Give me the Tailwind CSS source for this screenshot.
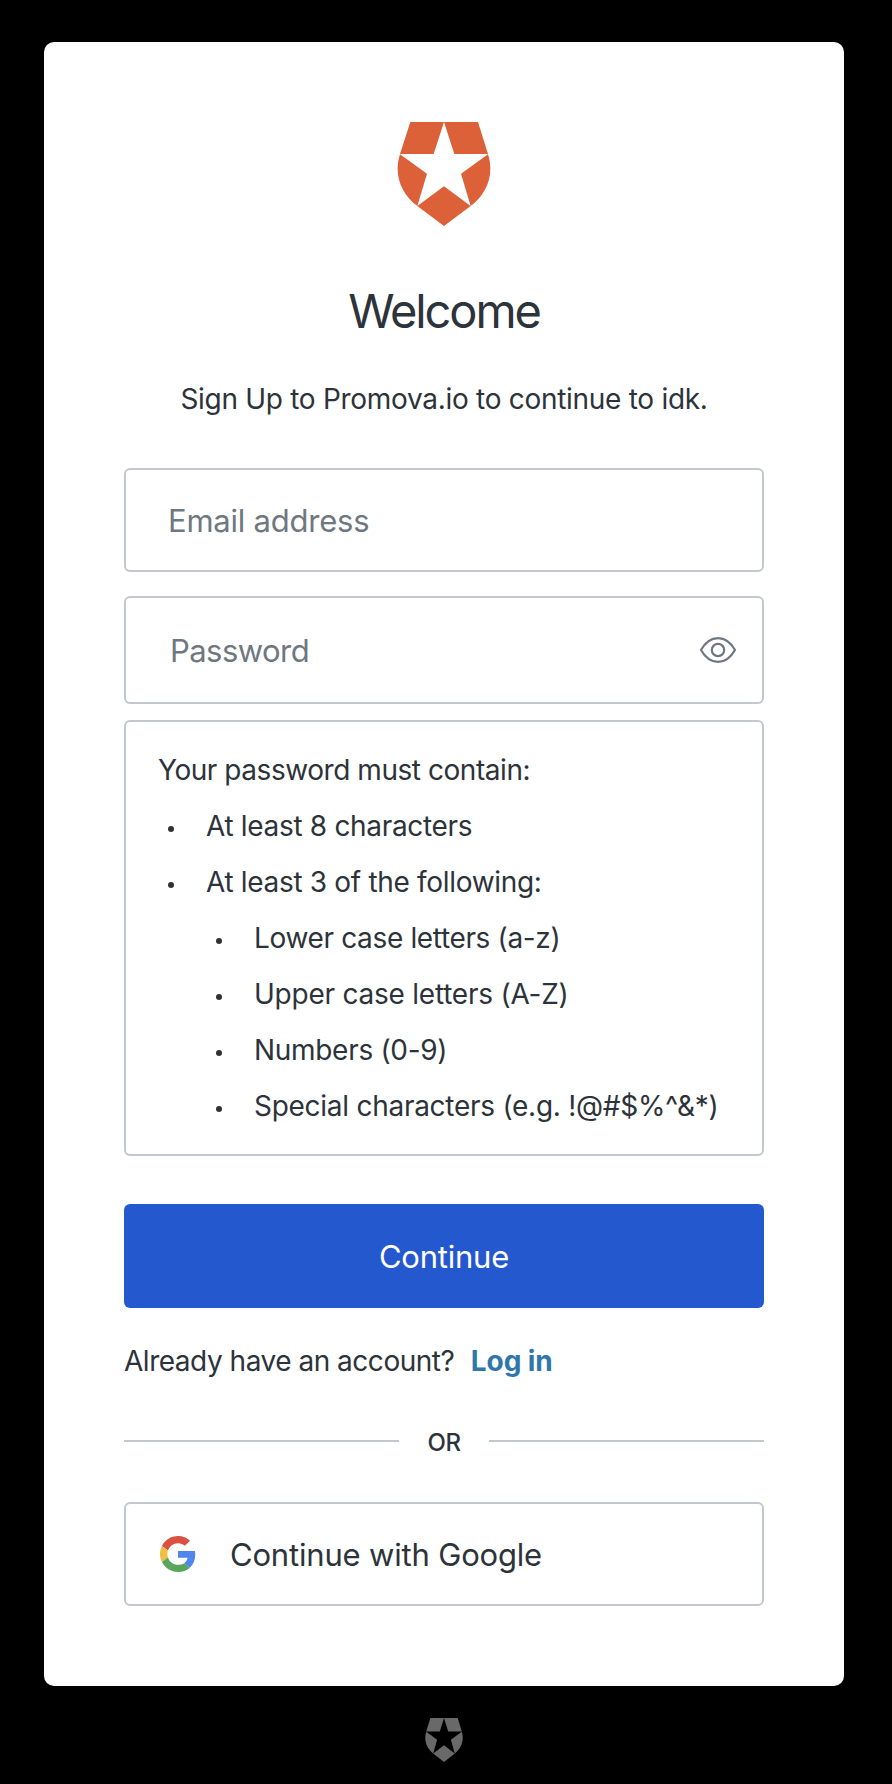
<!DOCTYPE html>
<html lang="en">
<head>
<meta charset="utf-8">
<title>Sign up</title>
<script src="https://cdn.jsdelivr.net/npm/@tailwindcss/browser@4"></script>
</head>
<body class="flex h-[1784px] w-[892px] flex-col bg-black pt-[42px] pl-11 font-[Inter,sans-serif] text-[28px] leading-10 text-[#2d333a] antialiased">
<main class="flex h-[1644px] w-[800px] flex-col rounded-[10px] bg-white px-20 pt-20">
  <svg class="h-[104px] w-[94px] shrink-0 self-center" viewBox="51 66 282 312" fill="#dc6038" aria-hidden="true">
    <path d="M91 66H192L161 162H60ZM192 66H294L324 162H223ZM60 163L141 221L112 318C64 283 40 224 60 163ZM324 163L243 221L272 318C320 283 344 224 324 163ZM192 259L272 318L192 378L112 318Z"/>
  </svg>
  <h1 class="mt-[55px] text-center text-[47px] leading-[60px] tracking-[-2.1px]">Welcome</h1>
  <p class="mt-[38px] text-center tracking-[-0.29px]">Sign Up to Promova.io to continue to idk.</p>

  <div class="mt-[49px] flex h-[104px] items-center rounded-md border-2 border-[#c2c8d0] pt-0.5 pl-[42px] text-[31px] tracking-[-0.22px] text-[#6f7780]">Email address</div>
  <div class="mt-6 flex h-[108px] items-center justify-between rounded-md border-2 border-[#c2c8d0] pr-[26px] pl-11 text-[31px] tracking-[-0.55px] text-[#6f7780]">
    <span class="pt-0.5">Password</span>
    <svg class="h-[26px] w-[36px]" viewBox="0 0 36 26" fill="none" stroke="#6f7780" stroke-width="2.200" aria-hidden="true">
      <path d="M1 13C5.500 5 11 1.100 18 1.100S30.500 5 35 13C30.500 21 25 24.900 18 24.900S5.500 21 1 13Z"/>
      <circle cx="18" cy="13" r="6.200"/>
    </svg>
  </div>

  <div class="mt-4 h-[436px] rounded-md border-2 border-[#c2c8d0] py-5 pl-8 leading-[56px] tracking-[-0.32px]">
    <p class="tracking-[-0.45px]">Your password must contain:</p>
    <ul>
      <li class="flex items-center"><i class="mt-1.5 mr-8 ml-2.5 size-1.5 rounded-full bg-[#2d333a]"></i>At least 8 characters</li>
      <li class="flex items-center"><i class="mt-1.5 mr-8 ml-2.5 size-1.5 rounded-full bg-[#2d333a]"></i>At least 3 of the following:</li>
    </ul>
    <ul class="pl-12">
      <li class="flex items-center tracking-[-0.35px]"><i class="mt-1.5 mr-8 ml-2.5 size-1.5 rounded-full bg-[#2d333a]"></i>Lower case letters (a-z)</li>
      <li class="flex items-center tracking-[-0.23px]"><i class="mt-1.5 mr-8 ml-2.5 size-1.5 rounded-full bg-[#2d333a]"></i>Upper case letters (A-Z)</li>
      <li class="flex items-center tracking-[-0.3px]"><i class="mt-1.5 mr-8 ml-2.5 size-1.5 rounded-full bg-[#2d333a]"></i>Numbers (0-9)</li>
      <li class="flex items-center tracking-[-0.27px]"><i class="mt-1.5 mr-8 ml-2.5 size-1.5 rounded-full bg-[#2d333a]"></i>Special characters (e.g. !@#$%^&amp;*)</li>
    </ul>
  </div>

  <button class="mt-12 h-[104px] rounded-md bg-[#2458cf] pt-0.5 text-[31px] tracking-[-0.22px] text-white">Continue</button>

  <p class="mt-[33px] flex tracking-[-0.48px]">Already have an account?<a class="ml-[16.500px] font-bold tracking-[-0.1px] text-[#2f76ab]">Log in</a></p>

  <div class="mt-10 flex h-10 items-center">
    <span class="h-0.5 w-[275px] bg-[#c2c8d0]"></span>
    <span class="flex-1 pt-[3px] text-center text-2xl font-medium tracking-[-0.4px]">OR</span>
    <span class="h-0.5 w-[275px] bg-[#c2c8d0]"></span>
  </div>

  <button class="mt-[41px] flex h-[104px] items-center rounded-md border-2 border-[#c2c8d0] pl-[34px] text-[31px] tracking-[-0.18px]">
    <svg class="size-9" viewBox="0 0 48 48" aria-hidden="true">
      <path fill="#db5141" d="M24 9.500c3.540 0 6.710 1.220 9.210 3.600l6.850-6.850C35.900 2.380 30.470 0 24 0 14.620 0 6.510 5.380 2.560 13.220l7.980 6.190C12.430 13.720 17.740 9.500 24 9.500z"/>
      <path fill="#5185ee" d="M46.980 24.550c0-1.570-.15-3.090-.38-4.550H24v9.020h12.940c-.58 2.960-2.260 5.480-4.780 7.180l7.730 6c4.510-4.180 7.090-10.360 7.090-17.650z"/>
      <path fill="#f2bf42" d="M10.530 28.590c-.48-1.450-.76-2.990-.76-4.590s.27-3.140.76-4.590l-7.980-6.190C.92 16.460 0 20.120 0 24c0 3.880.92 7.540 2.560 10.780l7.970-6.190z"/>
      <path fill="#58a65c" d="M24 48c6.480 0 11.930-2.130 15.890-5.810l-7.730-6c-2.150 1.450-4.920 2.300-8.160 2.300-6.260 0-11.570-4.220-13.470-9.910l-7.980 6.190C6.510 42.620 14.620 48 24 48z"/>
    </svg>
    <span class="ml-[34px] pt-0.5">Continue with Google</span>
  </button>
</main>
<svg class="mt-8 ml-[381px] h-11 w-[38px]" viewBox="51 66 282 312" preserveAspectRatio="none" fill="#696969" aria-hidden="true">
  <path d="M91 66H192L161 162H60ZM192 66H294L324 162H223ZM60 163L141 221L112 318C64 283 40 224 60 163ZM324 163L243 221L272 318C320 283 344 224 324 163ZM192 259L272 318L192 378L112 318Z"/>
</svg>
</body>
</html>
